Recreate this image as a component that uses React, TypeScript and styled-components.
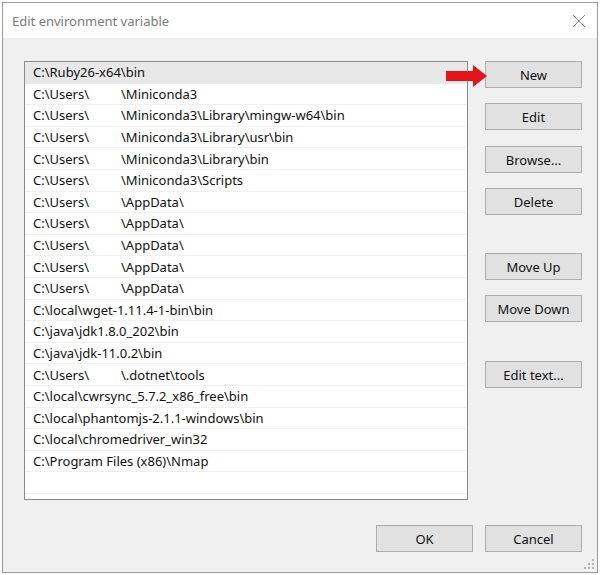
import React from 'react';
import styled, {createGlobalStyle} from 'styled-components';

const GlobalStyle = createGlobalStyle`
  html, body {
    margin: 0;
    padding: 0;
    background: #ffffff;
  }
  body {
    font-family: "Noto Sans", "Liberation Sans", sans-serif;
  }
`;

const Page = styled.div`
  width: 602px;
  height: 575px;
  padding: 2px 0 0 2px;
  box-sizing: border-box;
`;

const Dialog = styled.div`
  position: relative;
  width: 596px;
  height: 571px;
  box-sizing: border-box;
  border: 1px solid #9a9a9a;
  background: #f0f0f0;
  display: flex;
  flex-direction: column;
`;

const TitleBar = styled.div`
  height: 35px;
  background: #ffffff;
  display: flex;
  align-items: center;
  justify-content: space-between;
  padding: 0 10px 0 9px;
  flex-shrink: 0;
`;

const Title = styled.span`
  font-size: 13px;
  color: #7a7a7a;
  margin-top: 1px;
`;

const CloseButton = styled.div`
  width: 14px;
  height: 14px;
  display: flex;
  margin-right: 1px;
`;

const Body = styled.div`
  flex: 1;
  display: flex;
  flex-direction: column;
  padding: 23px 15px 0 21px;
`;

const Main = styled.div`
  display: flex;
  gap: 17px;
`;

const ListBox = styled.div`
  width: 445px;
  height: 439px;
  box-sizing: border-box;
  border: 1px solid #8a8a8a;
  background: #ffffff;
  display: flex;
  flex-direction: column;
  overflow: hidden;
`;

const Row = styled.div<{selected?: boolean}>`
  height: 21.6px;
  box-sizing: border-box;
  flex-shrink: 0;
  display: flex;
  align-items: center;
  padding-left: 8px;
  font-size: 13px;
  color: #111111;
  white-space: nowrap;
  background: ${({selected}) => (selected ? '#e8e8e8' : '#ffffff')};
  border-bottom: 1px solid ${({selected}) => (selected ? '#e8e8e8' : '#f0f0f0')};
`;

const UserPart = styled.span`
  display: inline-block;
  width: 88px;
`;

const Buttons = styled.div`
  display: flex;
  flex-direction: column;
  width: 97px;
`;

const Button = styled.button<{top?: number}>`
  width: 97px;
  height: 27px;
  margin-top: ${({top}) => top ?? 0}px;
  box-sizing: border-box;
  border: 1px solid #adadad;
  background: #e1e1e1;
  font-family: "Noto Sans", "Liberation Sans", sans-serif;
  font-size: 13px;
  color: #111111;
  padding: 0;
  display: flex;
  align-items: center;
  justify-content: center;
`;

const Footer = styled.div`
  display: flex;
  justify-content: flex-end;
  gap: 12px;
  margin-top: 25px;
`;

const Arrow = styled.svg`
  position: absolute;
  left: 442px;
  top: 60px;
`;

const Grip = styled.svg`
  position: absolute;
  right: 3px;
  bottom: 3px;
`;

type Entry = {user?: boolean; path: string};

const entries: Entry[] = [
  {path: 'C:\\Ruby26-x64\\bin'},
  {user: true, path: '\\Miniconda3'},
  {user: true, path: '\\Miniconda3\\Library\\mingw-w64\\bin'},
  {user: true, path: '\\Miniconda3\\Library\\usr\\bin'},
  {user: true, path: '\\Miniconda3\\Library\\bin'},
  {user: true, path: '\\Miniconda3\\Scripts'},
  {user: true, path: '\\AppData\\'},
  {user: true, path: '\\AppData\\'},
  {user: true, path: '\\AppData\\'},
  {user: true, path: '\\AppData\\'},
  {user: true, path: '\\AppData\\'},
  {path: 'C:\\local\\wget-1.11.4-1-bin\\bin'},
  {path: 'C:\\java\\jdk1.8.0_202\\bin'},
  {path: 'C:\\java\\jdk-11.0.2\\bin'},
  {user: true, path: '\\.dotnet\\tools'},
  {path: 'C:\\local\\cwrsync_5.7.2_x86_free\\bin'},
  {path: 'C:\\local\\phantomjs-2.1.1-windows\\bin'},
  {path: 'C:\\local\\chromedriver_win32'},
  {path: 'C:\\Program Files (x86)\\Nmap'},
  {path: ''},
  {path: ''},
];

const App: React.FC = () => {
  return (
    <Page>
      <GlobalStyle />
      <Dialog>
        <TitleBar>
          <Title>Edit environment variable</Title>
          <CloseButton>
            <svg width="14" height="14" viewBox="0 0 14 14">
              <path d="M1 1 L13 13 M13 1 L1 13" stroke="#8a8a8a" strokeWidth="1" fill="none" />
            </svg>
          </CloseButton>
        </TitleBar>
        <Body>
          <Main>
            <ListBox>
              {entries.map((e, i) => (
                <Row key={i} selected={i === 0}>
                  {e.user && <UserPart>C:\Users\</UserPart>}
                  {e.path}
                </Row>
              ))}
            </ListBox>
            <Buttons>
              <Button>New</Button>
              <Button top={15}>Edit</Button>
              <Button top={16}>Browse...</Button>
              <Button top={15}>Delete</Button>
              <Button top={38}>Move Up</Button>
              <Button top={15}>Move Down</Button>
              <Button top={39}>Edit text...</Button>
            </Buttons>
          </Main>
          <Footer>
            <Button>OK</Button>
            <Button>Cancel</Button>
          </Footer>
        </Body>
        <Arrow width="44" height="26" viewBox="0 0 44 26">
          <polygon points="1,8 28,8 28,2 42,13 28,24 28,18 1,18" fill="#e3141b" />
        </Arrow>
        <Grip width="10" height="10" viewBox="0 0 10 10">
          <g fill="#b4b4b4">
            <rect x="8" y="0" width="2" height="2" />
            <rect x="4" y="4" width="2" height="2" />
            <rect x="8" y="4" width="2" height="2" />
            <rect x="0" y="8" width="2" height="2" />
            <rect x="4" y="8" width="2" height="2" />
            <rect x="8" y="8" width="2" height="2" />
          </g>
        </Grip>
      </Dialog>
    </Page>
  );
};

export default App;
